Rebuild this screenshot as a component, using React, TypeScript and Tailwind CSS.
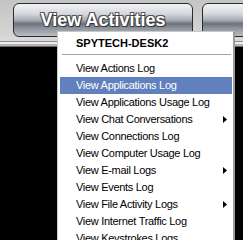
import React from "react";

const items: { label: string; sub?: boolean; active?: boolean }[] = [
  { label: "View Actions Log" },
  { label: "View Applications Log", active: true },
  { label: "View Applications Usage Log" },
  { label: "View Chat Conversations", sub: true },
  { label: "View Connections Log" },
  { label: "View Computer Usage Log" },
  { label: "View E-mail Logs", sub: true },
  { label: "View Events Log" },
  { label: "View File Activity Logs", sub: true },
  { label: "View Internet Traffic Log" },
  { label: "View Keystrokes Logs" },
];

const btnBg =
  "bg-[linear-gradient(to_bottom,#f2f3f6_0%,#d6d9de_30%,#a9aeb6_50%,#6c727d_62%,#8d939c_75%,#b9bdc4_100%)]";

export default function App() {
  return (
    <div
      className="relative w-[243px] h-[240px] overflow-hidden bg-black"
      style={{ fontFamily: '"Liberation Sans", Arial, sans-serif' }}
    >
      {/* toolbar */}
      <div className="flex flex-col">
        <div className="h-[37px] bg-[linear-gradient(to_bottom,#c4c4c4,#d6d6d6)] flex gap-[9px] pl-[13px] pt-[3px]">
          <div
            className={`h-[34px] w-[180px] shrink-0 rounded-[6px] border border-[#2b2b2b] ${btnBg} flex items-center justify-center`}
          >
            <span className="text-white font-bold text-[18px] leading-none [text-shadow:1px_1px_0_#333,-1px_-1px_0_#555,1px_-1px_0_#555,-1px_1px_0_#555]">
              View Activities
            </span>
          </div>
          <div
            className={`h-[34px] w-[100px] shrink-0 rounded-[6px] border border-[#2b2b2b] ${btnBg}`}
          />
        </div>
        <div className="h-[4px] bg-[#d9d9d9]" />
        <div className="h-[1px] bg-[#8e8e8e]" />
        <div className="h-[2px] bg-[#eeeeee]" />
        <div className="h-[2px] bg-[#b5b5b5]" />
        <div className="h-[1px] bg-[#6a6a6a]" />
      </div>

      {/* dropdown menu */}
      <div className="absolute left-[57px] top-[31px] w-[178px] h-[230px] bg-white border-l border-t border-[#c8c8c8] border-r-2 border-r-[#9c9c9c] pl-[2px] pr-[1px] text-[11px] text-black tracking-[-0.3px]">
        <div className="h-[22px] flex items-center pl-[16px] font-bold tracking-normal">
          SPYTECH-DESK2
        </div>
        <div className="h-px bg-[#a4a4a4] ml-[2px] mr-[1px]" />
        <div className="h-[5px]" />
        {items.map((it) => (
          <div
            key={it.label}
            className={`h-[17px] flex items-center justify-between pl-[16px] pr-[5px] ${
              it.active ? "bg-[#6180bd] text-white" : ""
            }`}
          >
            <span>{it.label}</span>
            {it.sub && (
              <svg width="4" height="7" viewBox="0 0 4 7">
                <path d="M0 0 L4 3.5 L0 7 Z" fill="#000" />
              </svg>
            )}
          </div>
        ))}
      </div>
    </div>
  );
}
